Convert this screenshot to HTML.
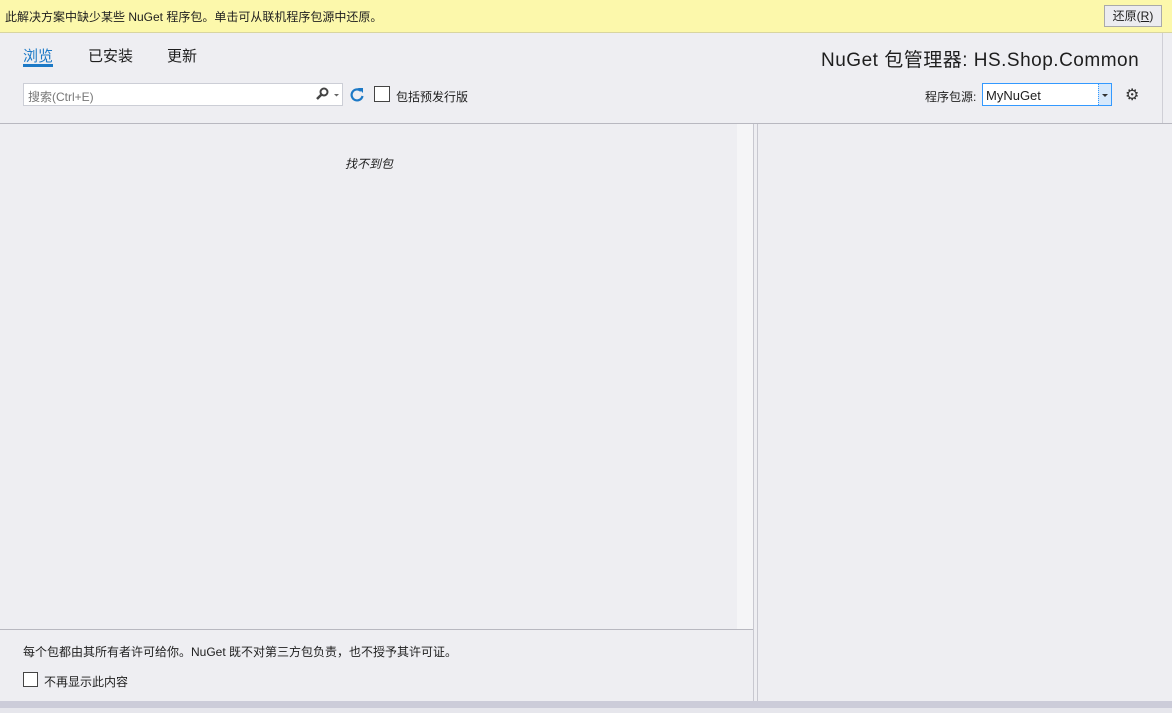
<!DOCTYPE html>
<html><head><meta charset="utf-8"><style>
*{margin:0;padding:0;box-sizing:border-box}
body{width:1172px;height:713px;background:#eeeef2;font-family:"Liberation Sans","Noto Sans CJK SC",sans-serif;font-size:12px;color:#1e1e1e;position:relative;overflow:hidden}
.a{position:absolute}
</style></head><body>
<div class="a" style="left:0;top:0;width:1172px;height:33px;background:#fcf8ab;border-bottom:1px solid #d8d5a0"></div>
<div class="a" style="left:5px;top:8px;font-size:12px">此解决方案中缺少某些 NuGet 程序包。单击可从联机程序包源中还原。</div>
<div class="a" style="left:1104px;top:5px;width:58px;height:22px;background:#ececf0;border:1px solid #aaa;font-size:12px;text-align:center;line-height:20px">还原(<u>R</u>)</div>
<div class="a" style="left:1162px;top:33px;width:1px;height:90px;background:#cfcfd6"></div>
<div class="a" style="left:23px;top:45px;font-size:15px;color:#1c79c6">浏览</div>
<div class="a" style="left:23px;top:64px;width:30px;height:3px;background:#1c79c6"></div>
<div class="a" style="left:88px;top:45px;font-size:15px">已安装</div>
<div class="a" style="left:167px;top:45px;font-size:15px">更新</div>
<div class="a" style="left:821px;top:45px;font-size:19px;letter-spacing:0.5px">NuGet 包管理器: HS.Shop.Common</div>
<div class="a" style="left:23px;top:83px;width:320px;height:23px;background:#fff;border:1px solid #ccced6"></div>
<div class="a" style="left:28px;top:88px;color:#777;font-size:12px">搜索(Ctrl+E)</div>
<svg class="a" style="left:314px;top:86px" width="28" height="16"><circle cx="10" cy="6" r="3.5" fill="none" stroke="#444" stroke-width="2"/><line x1="7.5" y1="8.5" x2="3" y2="13" stroke="#444" stroke-width="2.5"/><path d="M20 8h5l-2.5 2.5z" fill="#666"/></svg>
<svg class="a" style="left:349px;top:86px" width="16" height="17"><path d="M12 5A5.5 5.5 0 1 0 13.5 10" fill="none" stroke="#1c79c6" stroke-width="2.2"/><path d="M9 2l5 0 0 5z" fill="#1c79c6"/></svg>
<div class="a" style="left:374px;top:86px;width:16px;height:16px;background:#fff;border:1px solid #444"></div>
<div class="a" style="left:396px;top:88px">包括预发行版</div>
<div class="a" style="left:925px;top:88px">程序包源:</div>
<div class="a" style="left:982px;top:83px;width:130px;height:23px;background:#fff;border:1px solid #3399ff"></div>
<div class="a" style="left:986px;top:88px;font-size:13px">MyNuGet</div>
<div class="a" style="left:1098px;top:84px;width:13px;height:21px;background:#d6e8fb;border-left:1px dotted #3399ff"></div>
<div class="a" style="left:1102px;top:94px;width:0;height:0;border:3px solid transparent;border-top:3px solid #333"></div>
<div class="a" style="left:1125px;top:85px;font-size:16px;color:#333">⚙</div>
<div class="a" style="left:0;top:123px;width:1172px;height:1px;background:#b8b8c0"></div>
<div class="a" style="left:737px;top:124px;width:16px;height:505px;background:#f5f5f7"></div>
<div class="a" style="left:753px;top:124px;width:1px;height:578px;background:#c8c8d0"></div>
<div class="a" style="left:757px;top:124px;width:1px;height:578px;background:#c8c8d0"></div>
<div class="a" style="left:345px;top:155px;font-style:italic">找不到包</div>
<div class="a" style="left:0;top:629px;width:753px;height:1px;background:#b8b8c0"></div>
<div class="a" style="left:23px;top:643px">每个包都由其所有者许可给你。NuGet 既不对第三方包负责，也不授予其许可证。</div>
<div class="a" style="left:23px;top:672px;width:15px;height:15px;background:#fff;border:1px solid #444"></div>
<div class="a" style="left:44px;top:673px">不再显示此内容</div>
<div class="a" style="left:0;top:701px;width:1172px;height:12px;background:#ccccd9"></div>
<div class="a" style="left:0;top:708px;width:1172px;height:5px;background:#e6e6ec"></div>
</body></html>
